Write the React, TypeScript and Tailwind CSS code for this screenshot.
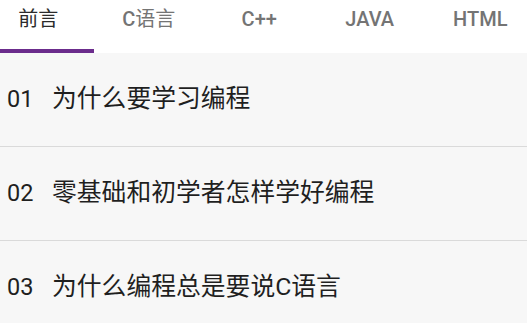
const tabs = ["前言", "C语言", "C++", "JAVA", "HTML"];

const lessons = [
  { no: "01", title: "为什么要学习编程" },
  { no: "02", title: "零基础和初学者怎样学好编程" },
  { no: "03", title: "为什么编程总是要说C语言" },
];

// Latin runs get medium weight, CJK runs stay regular (like the Android fallback font)
function TabLabel({ text }: { text: string }) {
  const runs = text.match(/[\u4e00-\u9fff]+|[^\u4e00-\u9fff]+/g) || [];
  return (
    <>
      {runs.map((r, i) =>
        /[\u4e00-\u9fff]/.test(r) ? (
          <span key={i} className="font-normal">
            {r}
          </span>
        ) : (
          <span key={i} className="font-medium">
            {r}
          </span>
        )
      )}
    </>
  );
}

export default function App() {
  return (
    <div
      className="w-[527px] h-[323px] overflow-hidden bg-[#f7f7f7]"
      style={{ fontFamily: 'Roboto, "Noto Sans CJK SC", sans-serif' }}
    >
      {/* Tab bar (scrolled slightly left) */}
      <div className="h-[53px] bg-white overflow-hidden">
        <div className="flex -ml-[17px]">
          {tabs.map((t, i) => (
            <div
              key={t}
              className="relative flex-none w-[110.5px] h-[53px] flex items-start justify-center pt-[4px]"
            >
              <span
                className={`text-[20px] ${
                  i === 0 ? "text-[#2b2b2b]" : "text-[#747474]"
                }`}
              >
                <TabLabel text={t} />
              </span>
              {i === 0 && (
                <div className="absolute left-0 right-0 bottom-0 h-[4px] bg-[#6b2c8c]" />
              )}
            </div>
          ))}
        </div>
      </div>

      {/* Lesson list */}
      <div>
        {lessons.map((l) => (
          <div
            key={l.no}
            className="h-[94px] flex items-baseline pt-[27px] border-b border-[#dadada] pl-[7px] text-[#1f1f1f]"
          >
            <span className="w-[45px] text-[23.5px]">{l.no}</span>
            <span className="text-[24.8px]">{l.title}</span>
          </div>
        ))}
      </div>
    </div>
  );
}
